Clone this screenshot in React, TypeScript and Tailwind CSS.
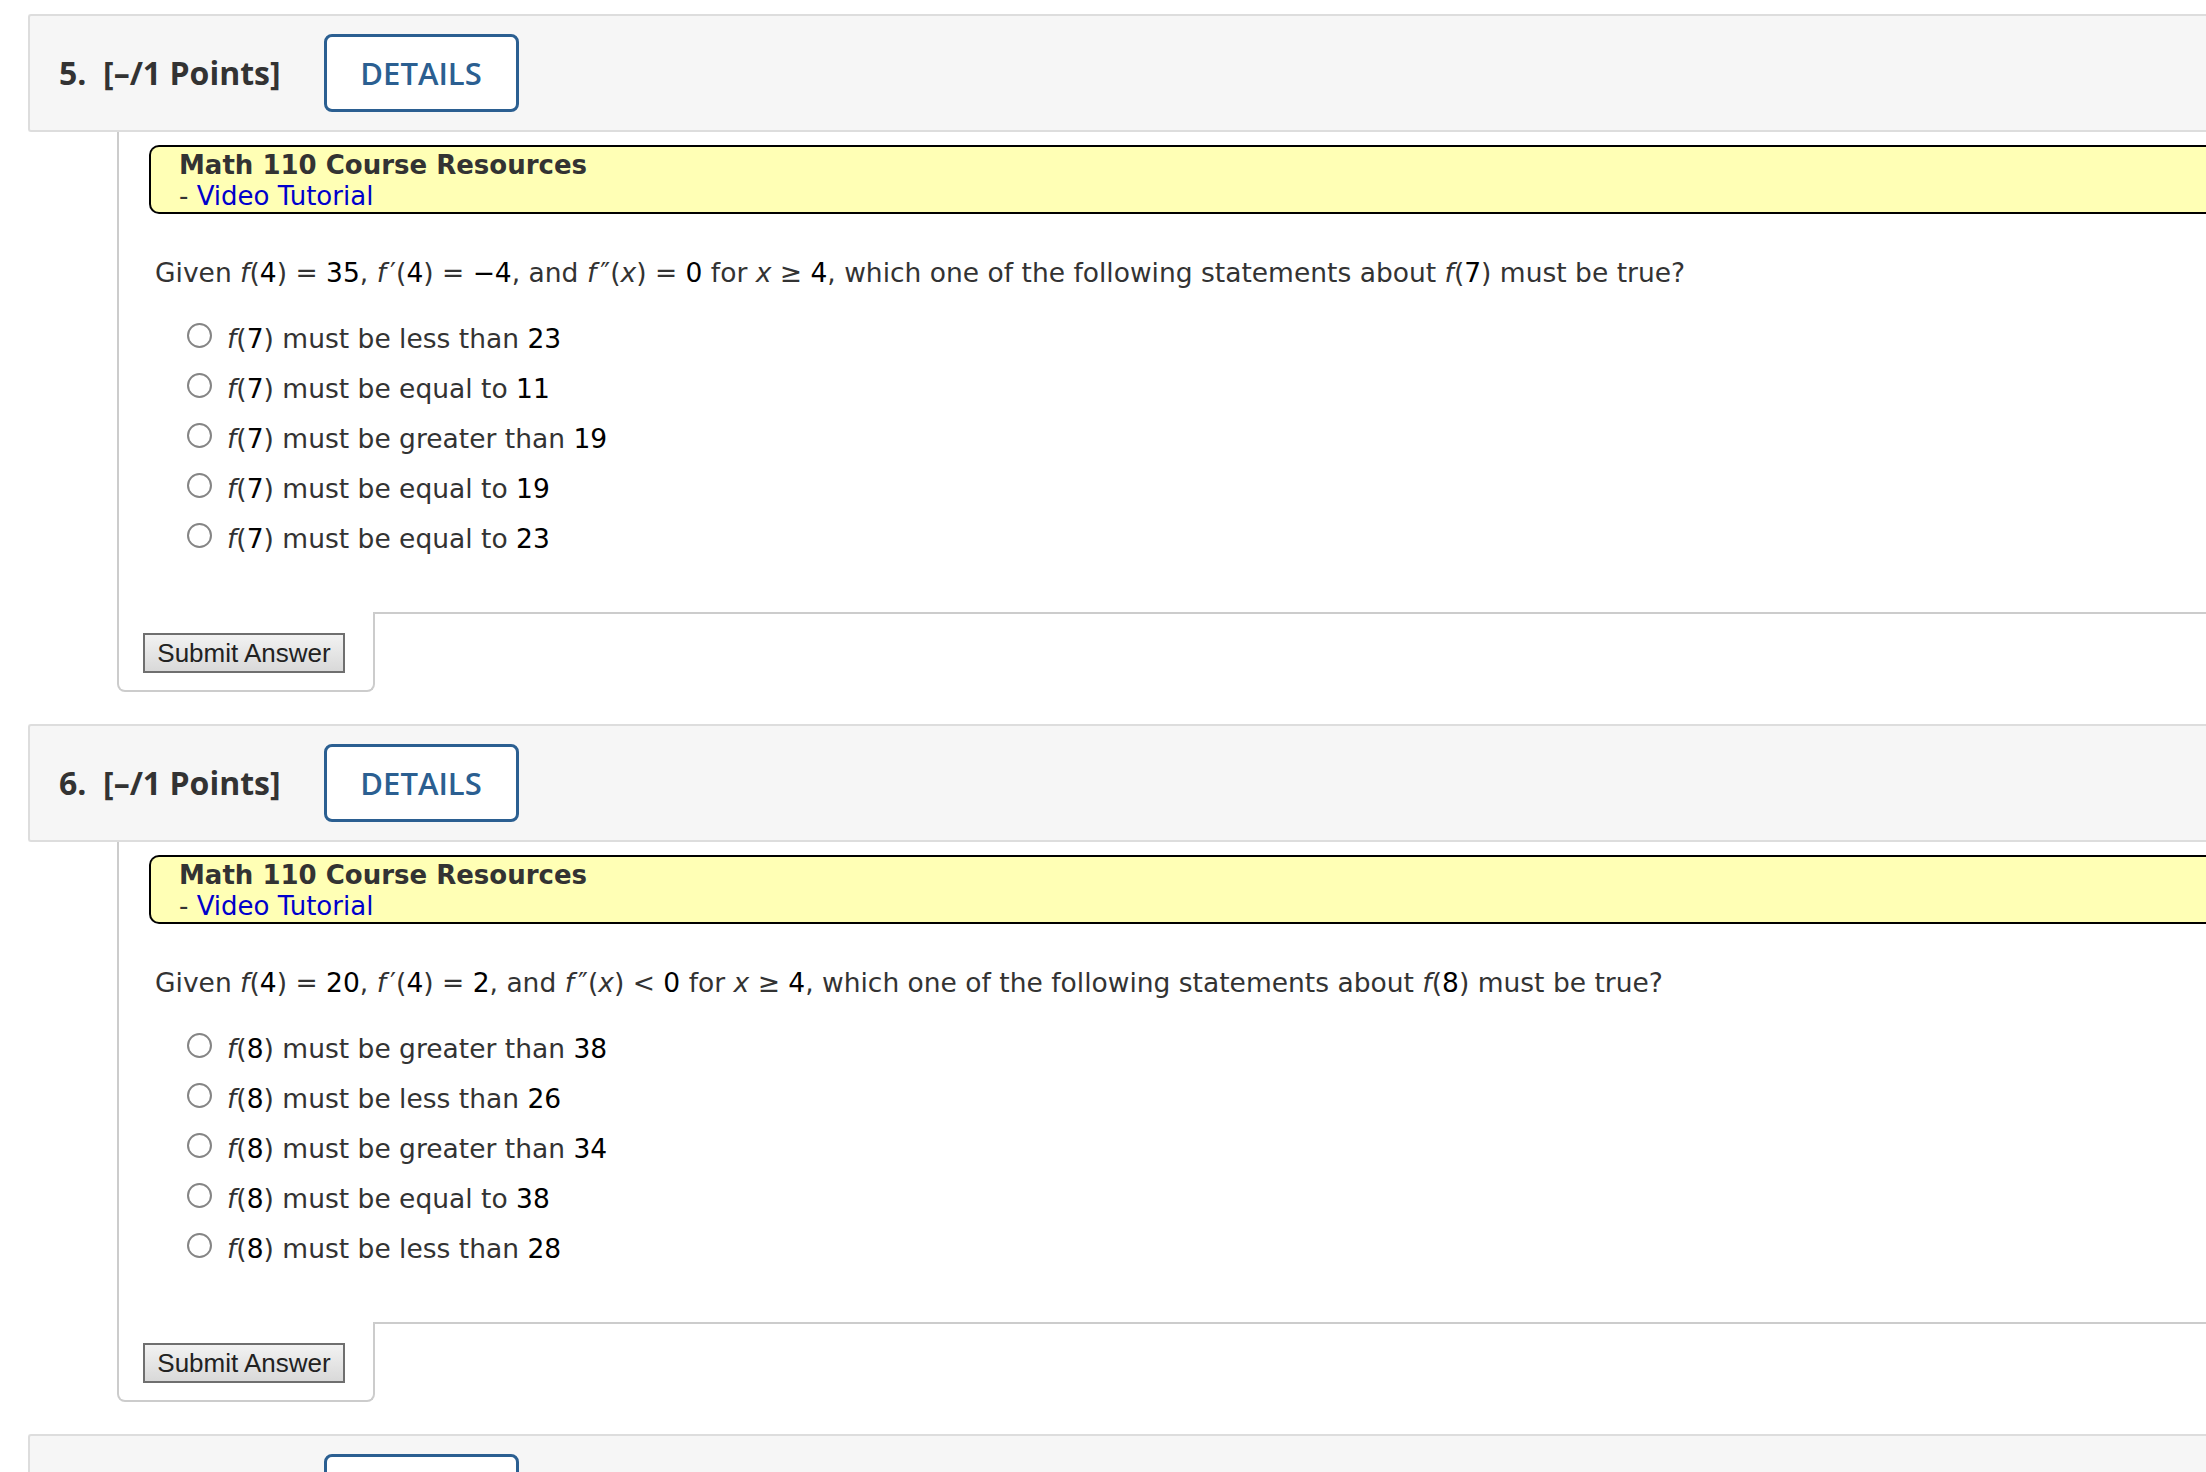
import React from "react";

const N: React.FC<{ children: React.ReactNode }> = ({ children }) => (
  <span className="text-black">{children}</span>
);

const F: React.FC<{ arg: string }> = ({ arg }) => (
  <>
    <i>f</i>(<N>{arg}</N>)
  </>
);

const Header: React.FC<{ num: number }> = ({ num }) => (
  <div className="ml-[28px] h-[118px] flex items-center bg-[#f6f6f6] border-2 border-r-0 border-[#dddddd] rounded-l-[3px] pl-[29px]">
    <h2 className="font-['Open_Sans'] font-bold text-[32px] text-[#333333] whitespace-pre">
      {num}.{"  "}[–/1 Points]
    </h2>
    <button className="ml-[43px] w-[195px] h-[78px] border-[3px] border-[#2b5f91] rounded-lg bg-white text-[#2b5f91] font-['Open_Sans'] font-semibold text-[31px]">
      DETAILS
    </button>
  </div>
);

interface QuestionProps {
  num: number;
  stem: React.ReactNode;
  options: React.ReactNode[];
}

const Question: React.FC<QuestionProps> = ({ num, stem, options }) => {
  return (
    <section className="pb-[32px]">
      <Header num={num} />

      <div className="ml-[117px]">
        <div className="border-l-2 border-[#cccccc] pt-[13px] pb-[48px]">
          <div className="ml-[30px] h-[69px] flex flex-col justify-center border-2 border-r-0 border-black rounded-l-[10px] bg-[#ffffb5] pl-[28px] pt-[2px] text-[26px] leading-[31px] text-[#333333]">
            <div className="font-bold">Math 110 Course Resources</div>
            <div>
              - <a className="text-[#0000cc]">Video Tutorial</a>
            </div>
          </div>

          <p className="mt-[43px] pl-[36px] text-[26.5px] leading-[32px] text-[#333333] whitespace-nowrap">
            {stem}
          </p>

          <div className="mt-[25px] pl-[68px]">
            {options.map((opt, i) => (
              <label key={i} className="h-[50px] flex items-center text-[26.5px] text-[#333333]">
                <span className="mb-[8px] w-[25px] h-[25px] rounded-full border-2 border-[#858585] bg-white shrink-0" />
                <span className="ml-[15px]">{opt}</span>
              </label>
            ))}
          </div>
        </div>

        <div className="flex">
          <div className="w-[258px] border-2 border-t-0 border-[#cccccc] rounded-b-lg pl-[24px] pt-[21px] pb-[17px]">
            <button className="h-[40px] w-[202px] border-2 border-[#6f6f6f] bg-gradient-to-b from-[#f2f2f2] to-[#d9d9d9] font-['Liberation_Sans'] text-[26px] leading-none text-[#222222]">
              Submit Answer
            </button>
          </div>
          <div className="flex-1 border-t-2 border-[#cccccc]" />
        </div>
      </div>
    </section>
  );
};

export default function App() {
  const q5 = (
    <>
      Given <F arg="4" /> = <N>35</N>, <i>f</i>
      <span className="ml-[4px]">′</span>(<N>4</N>) = <N>−4</N>, and <i>f</i>
      <span className="ml-[4px]">″</span>(<i>x</i>) = <N>0</N> for <i>x</i> ≥ <N>4</N>, which one of the
      following statements about <F arg="7" /> must be true?
    </>
  );
  const q6 = (
    <>
      Given <F arg="4" /> = <N>20</N>, <i>f</i>
      <span className="ml-[4px]">′</span>(<N>4</N>) = <N>2</N>, and <i>f</i>
      <span className="ml-[4px]">″</span>(<i>x</i>) &lt; <N>0</N> for <i>x</i> ≥ <N>4</N>, which one of the
      following statements about <F arg="8" /> must be true?
    </>
  );

  const opts = (arg: string, items: [string, string][]) =>
    items.map(([t, n]) => (
      <>
        <F arg={arg} /> {t} <N>{n}</N>
      </>
    ));

  return (
    <div className="h-screen bg-white overflow-hidden font-['DejaVu_Sans',sans-serif] pt-[14px]">
      <Question
        num={5}
        stem={q5}
        options={opts("7", [
          ["must be less than", "23"],
          ["must be equal to", "11"],
          ["must be greater than", "19"],
          ["must be equal to", "19"],
          ["must be equal to", "23"],
        ])}
      />
      <Question
        num={6}
        stem={q6}
        options={opts("8", [
          ["must be greater than", "38"],
          ["must be less than", "26"],
          ["must be greater than", "34"],
          ["must be equal to", "38"],
          ["must be less than", "28"],
        ])}
      />
      <Header num={7} />
    </div>
  );
}
